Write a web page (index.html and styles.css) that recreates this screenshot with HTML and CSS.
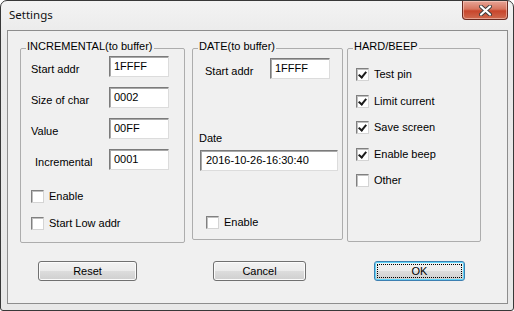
FILE: index.html
```html
<!DOCTYPE html>
<html lang="en">
<head>
  <meta charset="UTF-8">
  <title>Settings</title>
  <link rel="stylesheet" href="styles.css">
</head>
<body>
  <div class="window">
    <div class="titlebar">
      <span class="title">Settings</span>
      <div class="close-btn">
        <svg width="13" height="11" viewBox="0 0 13 11">
          <path d="M2 1.5 L11 9.5 M11 1.5 L2 9.5" stroke="#3c3c3c" stroke-width="4" stroke-linecap="round"/>
          <path d="M2 1.5 L11 9.5 M11 1.5 L2 9.5" stroke="#fff" stroke-width="2.2" stroke-linecap="round"/>
        </svg>
      </div>
    </div>

    <div class="client">
      <div class="groups">
        <div class="group group-inc">
          <span class="group-title">INCREMENTAL(to buffer)</span>
          <div class="field-row"><span class="field-label">Start addr</span><div class="textbox">1FFFF</div></div>
          <div class="field-row"><span class="field-label">Size of char</span><div class="textbox">0002</div></div>
          <div class="field-row"><span class="field-label">Value</span><div class="textbox">00FF</div></div>
          <div class="field-row"><span class="field-label indent">Incremental</span><div class="textbox">0001</div></div>
          <div class="check first-check"><span class="box"></span>Enable</div>
          <div class="check second-check"><span class="box"></span>Start Low addr</div>
        </div>

        <div class="group group-date">
          <span class="group-title">DATE(to buffer)</span>
          <div class="field-row"><span class="field-label">Start addr</span><div class="textbox">1FFFF</div></div>
          <div class="date-label">Date</div>
          <div class="textbox date-box">2016-10-26-16:30:40</div>
          <div class="check date-check"><span class="box"></span>Enable</div>
        </div>

        <div class="group group-hard">
          <span class="group-title">HARD/BEEP</span>
          <div class="check"><span class="box checked"></span>Test pin</div>
          <div class="check"><span class="box checked"></span>Limit current</div>
          <div class="check"><span class="box checked"></span>Save screen</div>
          <div class="check"><span class="box checked"></span>Enable beep</div>
          <div class="check"><span class="box"></span>Other</div>
        </div>
      </div>

      <div class="buttons">
        <button class="win-button reset-btn">Reset</button>
        <button class="win-button cancel-btn">Cancel</button>
        <button class="win-button ok-btn">OK</button>
      </div>
    </div>
  </div>
</body>
</html>
```

FILE: styles.css
```css
body {
  margin: 0;
  padding: 0;
  background-color: #fff;
  font-family: "Liberation Sans", Arial, sans-serif;
  font-size: 11px;
  color: #000;
}
.window {
  width: 514px;
  height: 311px;
  box-sizing: border-box;
  border: 1px solid #383838;
  border-radius: 7px 7px 3px 3px;
  background: linear-gradient(#f3f3f3, #e9e9e9 40px, #e8e8e8);
  overflow: hidden;
}
.titlebar {
  display: flex;
  justify-content: space-between;
  align-items: flex-start;
  height: 29px;
}
.title {
  font-family: "Noto Sans", "Open Sans", sans-serif;
  font-size: 11.5px;
  line-height: 14px;
  margin: 7px 0 0 8px;
  color: #111;
}
.close-btn {
  width: 46px;
  height: 19px;
  margin-right: 5px;
  box-sizing: border-box;
  border: 1px solid #6b2a20;
  border-top: none;
  border-radius: 0 0 4px 4px;
  background: linear-gradient(#e7a597, #d7755f 45%, #c8452b 55%, #cf6a4f);
  box-shadow: inset 0 0 0 1px rgba(255, 220, 210, 0.5);
  display: flex;
  align-items: center;
  justify-content: center;
}
.client {
  width: 501px;
  height: 274px;
  margin-left: 6px;
  box-sizing: border-box;
  border: 1px solid #8d8d8d;
  background-color: #f0f0f0;
  padding: 17px 0 0 12px;
}
.groups {
  display: flex;
  align-items: flex-start;
}
.group {
  position: relative;
  box-sizing: border-box;
  border: 1px solid #adadad;
  border-radius: 2px;
  display: flex;
  flex-direction: column;
  align-items: flex-start;
}
.group-title {
  position: absolute;
  top: -9px;
  left: 5px;
  padding: 0 1px;
  line-height: 13px;
  background-color: #f0f0f0;
  white-space: nowrap;
}
.group-inc {
  width: 165px;
  height: 195px;
  padding: 7px 0 0 10px;
}
.group-date {
  width: 151px;
  height: 192px;
  margin-left: 7px;
  padding: 9px 0 0 0;
}
.group-hard {
  width: 134px;
  height: 194px;
  margin-left: 4px;
  padding: 19px 0 0 8px;
  gap: 13.5px;
}
.field-row {
  display: flex;
  align-items: flex-start;
  margin-bottom: 10px;
}
.field-label {
  width: 78px;
  line-height: 13px;
  padding-top: 7px;
  white-space: nowrap;
}
.field-label.indent {
  padding-left: 4px;
  width: 74px;
}
.textbox {
  width: 60px;
  height: 21px;
  box-sizing: border-box;
  border: 1px solid;
  border-color: #7b7b7b #dcdcdc #dcdcdc #7b7b7b;
  box-shadow: inset 1px 1px 0 #a8a8a8;
  background-color: #fff;
  padding: 3px 0 0 4px;
  line-height: 13px;
}
.group-date .field-row {
  margin-left: 12px;
}
.group-date .field-label {
  width: 65px;
}
.date-label {
  margin: 43px 0 0 6px;
  line-height: 13px;
}
.date-box {
  width: 138px;
  margin: 5px 0 0 7px;
  padding-left: 5px;
}
.check {
  display: flex;
  align-items: center;
  gap: 5px;
  line-height: 13px;
  white-space: nowrap;
}
.first-check {
  margin-top: 10px;
}
.second-check {
  margin-top: 14px;
}
.date-check {
  margin: 45px 0 0 13px;
}
.box {
  width: 13px;
  height: 13px;
  box-sizing: border-box;
  border: 1px solid;
  border-color: #808080 #d4d4d4 #d4d4d4 #808080;
  box-shadow: inset 1px 1px 0 #c0c0c0;
  background-color: #fff;
  position: relative;
}
.box.checked::after {
  content: "";
  position: absolute;
  left: 3px;
  top: 1px;
  width: 3px;
  height: 6px;
  border: solid #1c1c1c;
  border-width: 0 2px 2px 0;
  transform: rotate(40deg);
}
.buttons {
  display: flex;
  margin: 18px 0 0 18px;
}
.win-button {
  height: 20px;
  box-sizing: border-box;
  border: 1px solid #707070;
  border-radius: 3px;
  background: linear-gradient(#f2f2f2, #ebebeb 50%, #dddddd 50%, #cfcfcf);
  box-shadow: inset 0 0 0 1px #fbfbfb;
  font-family: "Liberation Sans", Arial, sans-serif;
  font-size: 11px;
  line-height: 16px;
  color: #000;
  padding: 0;
}
.reset-btn {
  width: 99px;
}
.cancel-btn {
  width: 93px;
  margin-left: 76px;
}
.ok-btn {
  width: 91px;
  margin-left: 68px;
  border-color: #3c7fb1;
  box-shadow: inset 0 0 0 1px #5fd4f8;
  outline: 1px dotted #000;
  outline-offset: -4px;
}
```
